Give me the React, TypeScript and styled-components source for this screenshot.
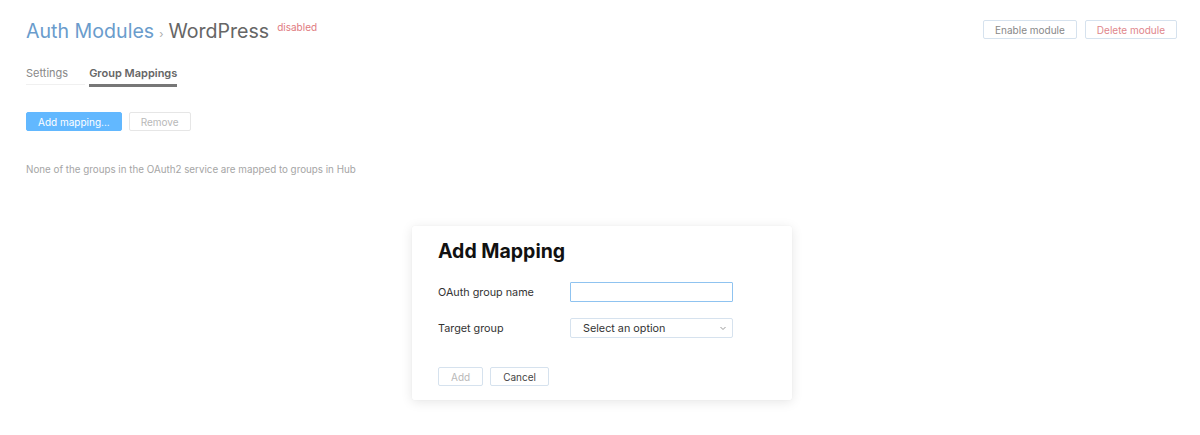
import { createGlobalStyle, styled } from "styled-components";

const GlobalStyle = createGlobalStyle`
  html, body {
    margin: 0;
    padding: 0;
    background: #fff;
    font-family: Inter, "Noto Sans", sans-serif;
  }
  * { box-sizing: border-box; }
`;

const Page = styled.div`
  width: 1200px;
  height: 435px;
  padding: 16px 23px 0 26px;
  display: flex;
  flex-direction: column;
  position: relative;
`;

const Header = styled.div`
  display: flex;
  justify-content: space-between;
  align-items: flex-start;
`;

const Title = styled.h1`
  margin: 0;
  font-size: 19.6px;
  font-weight: 400;
  line-height: 30px;
  display: flex;
  align-items: baseline;
`;

const Crumb = styled.span`
  color: #6a9ccc;
`;

const Sep = styled.span`
  color: #aaa;
  font-size: 11px;
  margin: 0 5px 0 5px;
`;

const Current = styled.span`
  color: #666;
`;

const Status = styled.span`
  color: #e07a80;
  font-size: 10px;
  align-self: flex-start;
  margin-left: 8px;
  line-height: 22px;
`;

const Actions = styled.div`
  display: flex;
  gap: 8px;
  padding-top: 4px;
`;

type Tone = "primary" | "danger" | "muted" | "soft" | "default";

const textColor: Record<Tone, string> = {
  primary: "#fff",
  danger: "#e0868b",
  muted: "#b8b8b8",
  soft: "#888",
  default: "#444",
};

const Button = styled.button<{ $tone?: Tone; $line?: string }>`
  height: 19px;
  padding: 0 11px;
  font-family: inherit;
  font-size: 10px;
  border-radius: 2px;
  cursor: pointer;
  border: 1px solid
    ${(p) => p.$line ?? (p.$tone === "primary" ? "#62b8ff" : p.$tone === "muted" ? "#e6e6e6" : "#d6e2ee")};
  background: ${(p) => (p.$tone === "primary" ? "#62b8ff" : "#fff")};
  color: ${(p) => textColor[p.$tone ?? "default"]};
`;

const DialogButton = styled(Button)`
  padding: 0 12px;
`;

const Tabs = styled.div`
  display: flex;
  gap: 4px;
  margin-top: 16px;
`;

const Tab = styled.div<{ $active?: boolean }>`
  font-size: 11px;
  line-height: 16px;
  padding: 0 0 3px;
  font-weight: ${(p) => (p.$active ? 600 : 400)};
  color: ${(p) => (p.$active ? "#666" : "#888")};
  border-bottom: ${(p) => (p.$active ? "3px solid #777" : "1px solid #f0f0f0")};
  margin-bottom: ${(p) => (p.$active ? "0" : "2px")};
  padding-right: ${(p) => (p.$active ? "0" : "17px")};
`;

const Toolbar = styled.div`
  display: flex;
  gap: 7px;
  margin-top: 25px;
`;

const EmptyNote = styled.p`
  margin: 32px 0 0;
  font-size: 9.8px;
  color: #a5a5a5;
  line-height: 14px;
`;

const Dialog = styled.div`
  position: absolute;
  left: 412px;
  top: 226px;
  width: 380px;
  height: 174px;
  background: #fff;
  border-radius: 2px;
  box-shadow: 0 2px 12px rgba(0, 0, 0, 0.1), 0 0 1px rgba(0, 0, 0, 0.08);
  padding: 12px 26px 0;
  display: flex;
  flex-direction: column;
`;

const DialogTitle = styled.h2`
  margin: 0;
  font-size: 19.5px;
  font-weight: 700;
  color: #111;
  line-height: 26px;
`;

const Form = styled.div`
  display: grid;
  grid-template-columns: 132px 163px;
  row-gap: 16px;
  align-items: center;
  margin-top: 18px;
`;

const Label = styled.label`
  font-size: 10.8px;
  color: #333;
`;

const Input = styled.input`
  height: 20px;
  width: 163px;
  border: 1px solid #8fc3f0;
  border-radius: 1px;
  outline: none;
  font-family: inherit;
`;

const Select = styled.div`
  height: 20px;
  width: 163px;
  border: 1px solid #d6e2ee;
  border-radius: 2px;
  display: flex;
  align-items: center;
  justify-content: space-between;
  padding: 0 5px 0 12px;
  font-size: 10.8px;
  color: #333;
`;

const Footer = styled.div`
  display: flex;
  gap: 7px;
  margin-top: 29px;
`;

export default function App() {
  return (
    <>
      <GlobalStyle />
      <Page>
        <Header>
          <Title>
            <Crumb>Auth Modules</Crumb>
            <Sep>›</Sep>
            <Current>WordPress</Current>
            <Status>disabled</Status>
          </Title>
          <Actions>
            <Button $tone="soft">Enable module</Button>
            <Button $tone="danger">Delete module</Button>
          </Actions>
        </Header>
        <Tabs>
          <Tab>Settings</Tab>
          <Tab $active>Group Mappings</Tab>
        </Tabs>
        <Toolbar>
          <Button $tone="primary">Add mapping...</Button>
          <Button $tone="muted">Remove</Button>
        </Toolbar>
        <EmptyNote>None of the groups in the OAuth2 service are mapped to groups in Hub</EmptyNote>
        <Dialog>
          <DialogTitle>Add Mapping</DialogTitle>
          <Form>
            <Label>OAuth group name</Label>
            <Input />
            <Label>Target group</Label>
            <Select>
              <span>Select an option</span>
              <svg width="8" height="8" viewBox="0 0 8 8">
                <path d="M1.5 3 L4 5.5 L6.5 3" fill="none" stroke="#999" strokeWidth="1" />
              </svg>
            </Select>
          </Form>
          <Footer>
            <DialogButton $tone="muted" $line="#d6e2ee">Add</DialogButton>
            <DialogButton>Cancel</DialogButton>
          </Footer>
        </Dialog>
      </Page>
    </>
  );
}
